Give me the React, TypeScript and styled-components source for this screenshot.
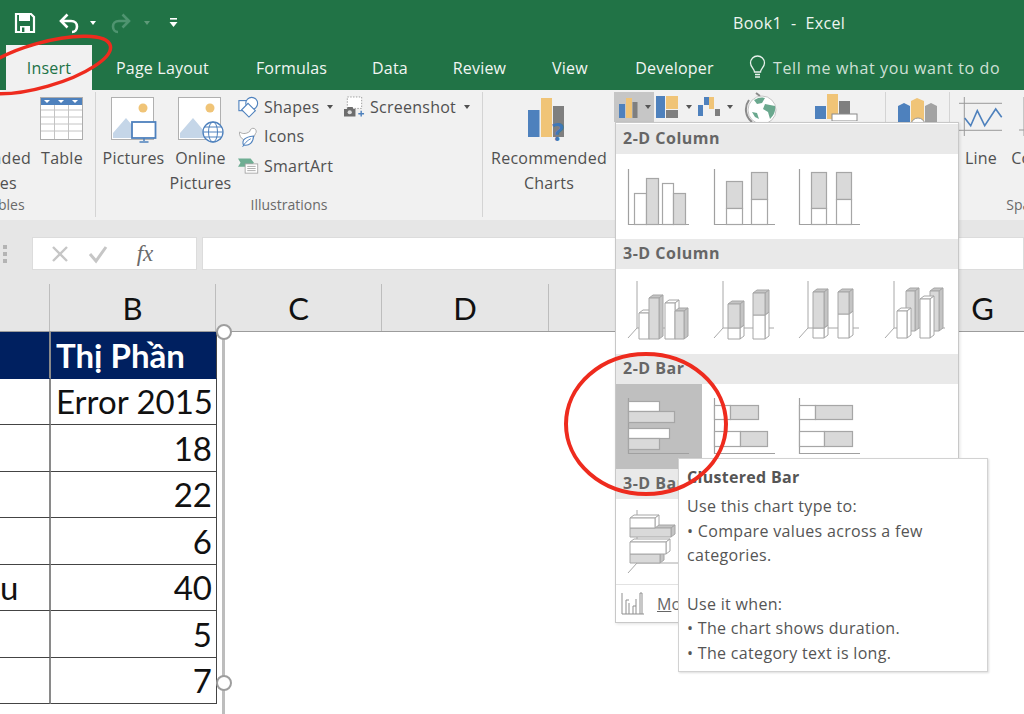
import React from "react";
import styled, { createGlobalStyle } from "styled-components";

const GREEN = "#217346";
const BLUE = "#4e81bd";
const YEL = "#f0c477";
const GRY = "#7f7f7f";
const LINE = "#a6a6a6";
const FILL = "#d9d9d9";

const Global = createGlobalStyle`
  html, body { margin: 0; padding: 0; background: #fff; }
  * { box-sizing: border-box; }
`;

const Page = styled.div`
  position: relative;
  width: 1024px;
  height: 714px;
  overflow: hidden;
  font-family: "Open Sans", "Noto Sans", sans-serif;
  background: #fff;
`;

const TitleBar = styled.header`
  height: 45px;
  background: ${GREEN};
  display: flex;
  align-items: center;
  padding-left: 14px;
`;
const Qat = styled.div`
  display: flex;
  align-items: center;
  width: 719px;
`;
const Title = styled.div`
  color: #eef5f0;
  font-size: 16px;
  letter-spacing: 0.35px;
  white-space: pre;
`;

const TabBar = styled.nav`
  height: 45px;
  background: ${GREEN};
  display: flex;
  align-items: stretch;
  padding-left: 6px;
`;
const Tab = styled.div<{ $w: number; $active?: boolean }>`
  width: ${(p) => p.$w}px;
  flex: none;
  display: flex;
  align-items: center;
  justify-content: center;
  font-size: 16px;
  letter-spacing: 0.2px;
  white-space: nowrap;
  color: ${(p) => (p.$active ? GREEN : "#f1f6f3")};
  background: ${(p) => (p.$active ? "#f1f1f1" : "transparent")};
`;
const TellMe = styled.div`
  display: flex;
  align-items: center;
  gap: 7px;
  margin-left: 11px;
  color: #cfe0d6;
  font-size: 16px;
  letter-spacing: 0.62px;
  white-space: nowrap;
`;

const Ribbon = styled.section`
  height: 130px;
  background: #f1f1f1;
  display: flex;
  padding-top: 2px;
  overflow: hidden;
  color: #505050;
  font-size: 16px;
`;
const Group = styled.div<{ $w: number; $start?: number; $open?: boolean }>`
  width: ${(p) => p.$w}px;
  margin-left: ${(p) => p.$start ?? 0}px;
  flex: none;
  height: 125px;
  display: flex;
  flex-direction: column;
  border-right: ${(p) => (p.$open ? "none" : "1px solid #d4d4d4")};
`;
const GroupBody = styled.div<{ $pad?: number }>`
  flex: 1;
  display: flex;
  padding-left: ${(p) => p.$pad ?? 0}px;
  min-height: 0;
`;
const GroupLabel = styled.div`
  height: 22px;
  line-height: 20px;
  text-align: center;
  font-size: 14px;
  color: #6a6a6a;
`;
const BigButton = styled.div<{ $w: number; $ml?: number }>`
  width: ${(p) => p.$w}px;
  margin-left: ${(p) => p.$ml ?? 0}px;
  flex: none;
  display: flex;
  flex-direction: column;
  align-items: center;
`;
const BigIcon = styled.div`
  height: 54px;
  padding-top: 5px;
  display: flex;
  justify-content: center;
`;
const BigLabel = styled.div`
  text-align: center;
  line-height: 24.5px;
  white-space: nowrap;
  letter-spacing: 0.25px;
`;
const SmallColumn = styled.div<{ $w: number; $ml?: number }>`
  width: ${(p) => p.$w}px;
  margin-left: ${(p) => p.$ml ?? 0}px;
  flex: none;
  display: flex;
  flex-direction: column;
`;
const SmallRow = styled.div`
  height: 29.5px;
  display: flex;
  align-items: center;
  gap: 5px;
  white-space: nowrap;
  letter-spacing: 0.25px;
`;
const IconSlot = styled.span`
  width: 21px;
  flex: none;
  display: flex;
  align-items: center;
  justify-content: center;
`;
const Caret = styled.span<{ $dim?: boolean; $ml?: number }>`
  display: inline-block;
  width: 0;
  height: 0;
  margin-left: ${(p) => p.$ml ?? 0}px;
  border-left: 3.5px solid transparent;
  border-right: 3.5px solid transparent;
  border-top: 4px solid ${(p) => (p.$dim ? "#5f9a79" : "currentColor")};
`;
const ChartMenus = styled.div`
  width: 272px;
  flex: none;
  margin-left: 4px;
  display: flex;
  align-items: flex-start;
`;
const ChartMenu = styled.div<{ $on?: boolean; $w: number }>`
  width: ${(p) => p.$w}px;
  height: 30px;
  flex: none;
  display: flex;
  align-items: center;
  justify-content: center;
  gap: 7px;
  color: #555;
  background: ${(p) => (p.$on ? "#c6c6c6" : "transparent")};
`;

const FormulaBar = styled.section`
  height: 64px;
  background: #e6e6e6;
  display: flex;
  align-items: center;
  gap: 5px;
  padding: 3px 0 0 3px;
`;
const Grip = styled.div`
  width: 24px;
  flex: none;
  display: flex;
  flex-direction: column;
  gap: 3px;
`;
const GripDot = styled.i`
  display: block;
  width: 4px;
  height: 4px;
  background: #b4b4b4;
`;
const NameBox = styled.div`
  width: 165px;
  height: 33px;
  flex: none;
  background: #fff;
  border: 1px solid #dcdcdc;
  display: flex;
  align-items: center;
  padding-left: 17px;
`;
const FormulaIcon = styled.span<{ $w: number }>`
  width: ${(p) => p.$w}px;
  flex: none;
  display: flex;
  justify-content: center;
`;
const Fx = styled.span`
  width: 40px;
  text-align: center;
  font-family: "Liberation Serif", serif;
  font-style: italic;
  font-size: 23px;
  color: #6a6a6a;
`;
const FormulaInput = styled.div`
  flex: 1;
  height: 33px;
  background: #fff;
  border: 1px solid #dcdcdc;
`;

const ColumnHeaders = styled.section`
  height: 48px;
  background: #e6e6e6;
  border-bottom: 1px solid #9c9c9c;
  display: grid;
  grid-template-columns: 50px 166px 166px 167px 176px 175px 166px;
`;
const ColHead = styled.div`
  border-right: 1px solid #bdbdbd;
  display: flex;
  align-items: center;
  justify-content: center;
  font-family: Lato, "Open Sans", sans-serif;
  font-size: 31px;
  color: #111;
`;

const Sheet = styled.section`
  position: relative;
  height: 382px;
  background: #fff;
`;
const Table = styled.div`
  width: 217px;
  display: grid;
  grid-template-columns: 51px 166px;
  grid-auto-rows: 46.5px;
  font-family: Lato, "Open Sans", sans-serif;
  font-size: 33px;
  color: #111;
`;
const Cell = styled.div<{ $head?: boolean; $right?: boolean; $first?: boolean }>`
  display: flex;
  align-items: center;
  justify-content: ${(p) => (p.$right ? "flex-end" : "flex-start")};
  padding: ${(p) => (p.$first ? "0" : "0 4px 0 5px")};
  border-bottom: 1px solid ${(p) => (p.$head ? "#002060" : "#444")};
  border-right: ${(p) => (p.$first ? "2px solid #8a8a8a" : "1px solid #444")};
  background: ${(p) => (p.$head ? "#002060" : "#fff")};
  color: ${(p) => (p.$head ? "#fff" : "#111")};
  font-weight: ${(p) => (p.$head ? 700 : 400)};
  white-space: nowrap;
  overflow: hidden;
`;
const FrameLine = styled.div`
  position: absolute;
  left: 222px;
  top: 0;
  bottom: 0;
  width: 3px;
  background: #bdbdbd;
`;
const Handle = styled.div<{ $top: number }>`
  position: absolute;
  left: 216px;
  top: ${(p) => p.$top}px;
  width: 16px;
  height: 16px;
  border-radius: 50%;
  background: #fff;
  border: 2.5px solid #9e9e9e;
`;

const Gallery = styled.div`
  position: absolute;
  left: 615px;
  top: 122px;
  width: 344px;
  height: 501px;
  background: #fff;
  border: 1px solid #c8c8c8;
  box-shadow: 1px 1px 3px rgba(0, 0, 0, 0.12);
  padding-top: 1px;
`;
const GalleryHead = styled.div`
  height: 29.5px;
  background: #e9e9e9;
  color: #666;
  font-weight: 700;
  font-size: 16px;
  letter-spacing: 0.5px;
  line-height: 29px;
  padding-left: 7px;
`;
const GalleryRow = styled.div`
  height: 85.5px;
  display: flex;
`;
const Thumb = styled.div<{ $on?: boolean }>`
  width: 85.5px;
  height: 85.5px;
  flex: none;
  background: ${(p) => (p.$on ? "#bfbfbf" : "transparent")};
`;
const MoreRow = styled.div`
  height: 38px;
  border-top: 1px solid #e2e2e2;
  display: flex;
  align-items: center;
  gap: 12px;
  padding-left: 5px;
  color: #666;
  font-size: 16px;
  white-space: nowrap;
  overflow: hidden;
`;

const Tooltip = styled.aside`
  position: absolute;
  left: 678px;
  top: 458px;
  width: 310px;
  height: 214px;
  background: #fff;
  border: 1px solid #d2d2d2;
  box-shadow: 1px 1px 2px rgba(0, 0, 0, 0.14);
  padding: 6px 0 0 8px;
  color: #555;
  font-size: 16px;
`;
const TipTitle = styled.div`
  font-weight: 700;
  line-height: 24.4px;
  margin-bottom: 5px;
  letter-spacing: 0.3px;
`;
const TipLine = styled.div`
  height: 24.4px;
  line-height: 24.4px;
  white-space: pre;
  letter-spacing: 0.32px;
`;

const Annotation = styled.svg<{ $x: number; $y: number }>`
  position: absolute;
  left: ${(p) => p.$x}px;
  top: ${(p) => p.$y}px;
  overflow: visible;
  pointer-events: none;
`;

/* ---------- ribbon drawings ---------- */
const Save = () => (
  <svg width="22" height="22" viewBox="0 0 22 22">
    <path d="M2 2h15l3 3v15H2z" fill="none" stroke="#fff" strokeWidth="2.2" />
    <rect x="5" y="2" width="11" height="7" fill="#fff" />
    <rect x="6" y="14" width="10" height="6" fill="#fff" />
    <rect x="8" y="15.5" width="2.4" height="4.5" fill={GREEN} />
  </svg>
);
const Undo = ({ dim }: { dim?: boolean }) => (
  <svg width="22" height="22" viewBox="0 0 22 22" style={dim ? { transform: "scaleX(-1)" } : undefined}>
    <path
      d="M9.5 2.5 3 9l6.500 6.500M3.500 9H13c4 0 6 2.500 6 5.500S17 20 14 20"
      fill="none"
      stroke={dim ? "#4f9470" : "#fff"}
      strokeWidth="2.6"
    />
  </svg>
);
const Customize = () => (
  <svg width="9" height="12" viewBox="0 0 9 12">
    <rect x="1" y="1" width="7" height="1.600" fill="#fff" />
    <path d="M0.500 5h8L4.500 10z" fill="#fff" />
  </svg>
);
const Bulb = () => (
  <svg width="17" height="25" viewBox="0 0 17 25">
    <path
      d="M5.500 17c0-3-4-5-4-9a7 7 0 0 1 14 0c0 4-4 6-4 9z"
      fill="none"
      stroke="#e8f1ec"
      strokeWidth="1.300"
    />
    <path d="M6 19.500h5M6 22h5" stroke="#e8f1ec" strokeWidth="1.600" />
  </svg>
);
const TableIcon = () => {
  const ys = [13, 20, 27, 34];
  return (
    <svg width="44" height="44" viewBox="0 0 44 44">
      <rect x="0.500" y="0.500" width="42" height="42" fill="#fff" stroke="#adadad" />
      <rect x="1" y="1" width="41" height="7" fill={BLUE} />
      {[7, 21, 35].map((x) => (
        <path key={x} d={`M${x - 3} 3h6l-3 3z`} fill="#fff" />
      ))}
      {ys.map((y) => (
        <path key={y} d={`M1 ${y}h41`} stroke="#c4c4c4" />
      ))}
      <path d="M14.500 8v34M28.500 8v34" stroke="#c4c4c4" />
    </svg>
  );
};
const PhotoBase = () => (
  <>
    <rect x="0.500" y="0.500" width="42" height="42" fill="#fff" stroke="#b0b0b0" />
    <circle cx="32" cy="11" r="4.500" fill={YEL} />
    <path d="M2 41v-5l13-15 11 13 8 7z" fill="#c5d6e8" />
  </>
);
const PicturesIcon = () => (
  <svg width="46" height="47" viewBox="0 0 46 47">
    <PhotoBase />
    <rect x="21" y="25" width="23.500" height="16" fill="#fff" stroke={BLUE} strokeWidth="1.800" />
    <path d="M33 41v3M28.500 45h9" stroke={BLUE} strokeWidth="1.500" />
  </svg>
);
const OnlineIcon = () => (
  <svg width="46" height="47" viewBox="0 0 46 47">
    <PhotoBase />
    <circle cx="35" cy="35" r="10" fill="#fff" stroke={BLUE} strokeWidth="1.300" />
    <ellipse cx="35" cy="35" rx="4.500" ry="10" fill="none" stroke={BLUE} />
    <path d="M25 35h20M26.500 30h17M26.500 40h17" stroke={BLUE} fill="none" />
  </svg>
);
const ShapesIcon = () => (
  <svg width="23" height="24" viewBox="0 0 23 24">
    <rect x="1" y="5" width="12" height="11" fill="#fff" stroke={BLUE} strokeWidth="1.200" />
    <circle cx="15" cy="8" r="6.500" fill="#fff" stroke={BLUE} strokeWidth="1.200" />
    <path d="M11 8l8 8-7 7-8-8z" fill="#fff" stroke={BLUE} strokeWidth="1.200" />
  </svg>
);
const DuckIcon = () => (
  <svg width="23" height="24" viewBox="0 0 23 24">
    <path
      d="M13 7a3.500 3.500 0 1 1 6 2.500c-1 2-1 4-4 6-3 1.500-9 1.500-11-1-2-2-3-6-2-7 2 2 6 3 11-.500z"
      fill="#fff"
      stroke="#a3a3a3"
    />
    <path d="M6 22c-2-5 1-9 11-10 0 7-5 11-10 10z" fill="#fff" stroke={BLUE} strokeWidth="1.200" />
    <path d="M5 24c2-4 5-7 9-9" stroke={BLUE} fill="none" />
  </svg>
);
const SmartArtIcon = () => (
  <svg width="25" height="20" viewBox="0 0 25 20">
    <path d="M0 1h15l4 5-4 5H0l3-5z" fill="#6fae93" />
    <rect x="8.500" y="7.500" width="15" height="11" fill="#fff" stroke="#a0a0a0" />
    <path d="M11 10.500h10M11 13h10M11 15.500h10" stroke="#a0a0a0" />
  </svg>
);
const ScreenshotIcon = () => (
  <svg width="22" height="22" viewBox="0 0 22 22">
    <rect x="3.500" y="0.500" width="15" height="12" fill="#fff" stroke="#9a9a9a" strokeDasharray="1.500 1.500" />
    <path d="M0 13h3l1-2h5l1 2h2v8H0z" fill="#6d6d6d" />
    <circle cx="6" cy="16.500" r="2.200" fill="#ddd" />
    <path d="M18 15v6M15 18h6" stroke={BLUE} strokeWidth="1.500" />
  </svg>
);
const RecommendedIcon = () => (
  <svg width="46" height="47" viewBox="0 0 46 47">
    <rect x="2" y="13" width="11.500" height="27" fill={BLUE} />
    <rect x="15" y="1" width="11" height="39" fill={YEL} />
    <rect x="27" y="9" width="11" height="31" fill={GRY} />
    <text x="26" y="44" fontSize="25" fontWeight="700" fill="#3f78b8" fontFamily="Open Sans, sans-serif">
      ?
    </text>
  </svg>
);
const ColumnMenuIcon = () => (
  <svg width="20" height="21" viewBox="0 0 20 21">
    <rect x="1" y="7" width="6" height="14" fill={BLUE} />
    <rect x="8" y="1" width="6" height="20" fill={YEL} />
    <rect x="14.500" y="5" width="5" height="16" fill={GRY} />
  </svg>
);
const HierarchyIcon = () => (
  <svg width="23" height="23" viewBox="0 0 23 23">
    <rect x="0" y="0" width="9" height="22" fill={BLUE} />
    <rect x="10" y="0" width="12" height="13" fill={YEL} />
    <rect x="10" y="14" width="12" height="8" fill={GRY} />
  </svg>
);
const WaterfallIcon = () => (
  <svg width="22" height="20" viewBox="0 0 22 20">
    <rect x="0" y="8" width="5" height="11" fill={BLUE} />
    <rect x="6" y="0" width="5" height="8" fill={BLUE} />
    <rect x="11" y="0" width="5" height="12" fill={YEL} />
    <rect x="17" y="12" width="5" height="7" fill={GRY} />
  </svg>
);
const GlobeIcon = () => (
  <svg width="34" height="30" viewBox="0 0 34 30">
    <path d="M12 1l4 3M5 8a16 16 0 0 0 3 22" stroke="#8a8a8a" strokeWidth="2" fill="none" />
    <circle cx="18" cy="18" r="14" fill="#fff" stroke="#c4c4c4" />
    <path d="M10 8c5-3 8-3 11-2l-3 5-5 1zM21 12l10 2c1 6-2 10-5 13l-2-7-5-3zM8 20l5 1 2 6-4-2z" fill="#6aa88e" />
  </svg>
);
const PivotIcon = () => (
  <svg width="44" height="28" viewBox="0 0 44 28">
    <rect x="1" y="13" width="11" height="13" fill={BLUE} />
    <rect x="13" y="1" width="11" height="25" fill={YEL} />
    <rect x="25" y="8" width="11" height="18" fill={GRY} />
    <rect x="18" y="21" width="25" height="7" fill="#fff" stroke="#8a8a8a" />
  </svg>
);
const MapIcon = () => (
  <svg width="42" height="30" viewBox="0 0 42 30">
    <path d="M1 9l6-3 6 3v20H1z" fill={BLUE} />
    <path d="M14 4l6-3 7 3v25H14z" fill={YEL} />
    <path d="M28 9l6-3 6 3v20H28z" fill="#a3a3a3" />
    <circle cx="21" cy="28" r="7" fill="#fff" stroke="#999" />
  </svg>
);
const LineIcon = () => (
  <svg width="44" height="40" viewBox="0 0 44 40">
    <path d="M5.300 0v39M0 6.300h43M0 33.300h43" stroke="#9a9a9a" fill="none" />
    <path d="M5.700 21l6 7.700 6.600-15 7.400 15 11-16.700 6 8.300" stroke={BLUE} strokeWidth="1.600" fill="none" />
  </svg>
);
const NextIcon = () => (
  <svg width="44" height="40" viewBox="0 0 44 40">
    <path d="M5 0v39M0 33h43" stroke="#9a9a9a" fill="none" />
  </svg>
);

/* ---------- gallery thumbnails ---------- */
const Thumbnail = ({ children }: { children: React.ReactNode }) => (
  <svg width="85" height="85" viewBox="0 0 85 85">
    {children}
  </svg>
);
const Axes = ({ x = 12, top = 15, y = 70, end = 73 }) => (
  <path d={`M${x + 0.5} ${top}V${y + 0.5}H${end}`} fill="none" stroke="#a0a0a0" strokeWidth="1.200" />
);
const R = ({ x, y, w, h, gray }: { x: number; y: number; w: number; h: number; gray?: boolean }) => (
  <rect x={x + 0.5} y={y + 0.5} width={w} height={h} fill={gray ? FILL : "#fff"} stroke={LINE} strokeWidth="1.200" />
);
const Box3D = ({ x, top, bottom, w, gray }: { x: number; top: number; bottom: number; w: number; gray?: boolean }) => {
  const d = 4;
  const f = gray ? FILL : "#fff";
  return (
    <g stroke={LINE} strokeWidth="1" strokeLinejoin="round">
      <path d={`M${x} ${top}l${d} -3h${w}l${-d} 3z`} fill={gray ? "#c4c4c4" : "#fff"} />
      <path d={`M${x + w} ${top}l${d} -3v${bottom - top}l${-d} 3z`} fill={gray ? "#c4c4c4" : "#fff"} />
      <rect x={x} y={top} width={w} height={bottom - top} fill={f} />
    </g>
  );
};
const Floor3D = ({ far = 72 }: { far?: number }) => (
  <path d={`M21 12V59M12 69L21 59H${far}`} fill="none" stroke="#a8a8a8" strokeWidth="1" />
);
const StackBox = ({ x, top, split, bottom, w }: { x: number; top: number; split: number; bottom: number; w: number }) => (
  <>
    <Box3D x={x} top={split} bottom={bottom} w={w} />
    <Box3D x={x} top={top} bottom={split} w={w} gray />
  </>
);

const Column2D = [
  <Thumbnail key="a">
    <Axes />
    <R x={18} y={39} w={12} h={31} />
    <R x={30} y={24} w={12} h={46} gray />
    <R x={46} y={29} w={11} h={41} />
    <R x={57} y={39} w={12} h={31} gray />
  </Thumbnail>,
  <Thumbnail key="b">
    <Axes />
    <R x={24} y={27} w={16} h={27} gray />
    <R x={24} y={54} w={16} h={16} />
    <R x={49} y={18} w={16} h={27} gray />
    <R x={49} y={45} w={16} h={25} />
  </Thumbnail>,
  <Thumbnail key="c">
    <Axes />
    <R x={24} y={18} w={15} h={36} gray />
    <R x={24} y={54} w={15} h={16} />
    <R x={49} y={18} w={15} h={27} gray />
    <R x={49} y={45} w={15} h={25} />
  </Thumbnail>,
];
const Column3D = [
  <Thumbnail key="a">
    <Floor3D />
    <Box3D x={23} top={44} bottom={70} w={10} />
    <Box3D x={33} top={29} bottom={70} w={10} gray />
    <Box3D x={49} top={34} bottom={70} w={10} />
    <Box3D x={59} top={42} bottom={70} w={9} gray />
  </Thumbnail>,
  <Thumbnail key="b">
    <Floor3D />
    <StackBox x={26} top={35} split={59} bottom={70} w={12} />
    <StackBox x={51} top={24} split={46} bottom={70} w={12} />
  </Thumbnail>,
  <Thumbnail key="c">
    <Floor3D />
    <StackBox x={26} top={23} split={59} bottom={69} w={11} />
    <StackBox x={51} top={23} split={45} bottom={69} w={11} />
  </Thumbnail>,
  <Thumbnail key="d">
    <Floor3D />
    <Box3D x={33} top={22} bottom={62} w={9} gray />
    <Box3D x={57} top={22} bottom={62} w={9} gray />
    <Box3D x={24} top={42} bottom={69} w={10} />
    <Box3D x={47} top={30} bottom={69} w={10} />
  </Thumbnail>,
];
const Bar2D = [
  <Thumbnail key="a">
    <Axes top={14} y={69} />
    <R x={12} y={17} w={31} h={10} />
    <R x={12} y={27} w={46} h={11} gray />
    <R x={12} y={44} w={41} h={10} />
    <R x={12} y={54} w={31} h={11} gray />
  </Thumbnail>,
  <Thumbnail key="b">
    <Axes top={14} y={69} />
    <R x={12} y={21} w={16} h={14} />
    <R x={28} y={21} w={28} h={14} gray />
    <R x={12} y={47} w={26} h={15} />
    <R x={38} y={47} w={27} h={15} gray />
  </Thumbnail>,
  <Thumbnail key="c">
    <Axes top={14} y={69} />
    <R x={12} y={21} w={16} h={14} />
    <R x={28} y={21} w={37} h={14} gray />
    <R x={12} y={47} w={25} h={15} />
    <R x={37} y={47} w={28} h={15} gray />
  </Thumbnail>,
];
const Bar3D = [
  <Thumbnail key="a">
    <path d="M21 11V64M12 74L21 64H73" fill="none" stroke="#a8a8a8" />
    <Box3D x={14} top={29} bottom={38} w={41} gray />
    <Box3D x={14} top={19} bottom={29} w={25} />
    <Box3D x={14} top={55} bottom={64} w={30} gray />
    <Box3D x={14} top={43} bottom={55} w={36} />
  </Thumbnail>,
];

const MoreIcon = () => (
  <svg width="24" height="24" viewBox="0 0 24 24">
    <path d="M1 1v21h22" fill="none" stroke="#8f8f8f" />
    <path d="M5 8v14M8 11v11M12 14v8M15 7v15M19 1v21M21 1v21M5 8h3M12 14h3M19 1h2" fill="none" stroke="#8f8f8f" />
  </svg>
);

const tabs: [string, number, boolean?][] = [
  ["Insert", 86, true],
  ["Page Layout", 141],
  ["Formulas", 117],
  ["Data", 80],
  ["Review", 99],
  ["View", 82],
  ["Developer", 127],
];

const rows = [
  ["", "Error 2015", false],
  ["", "18", true],
  ["", "22", true],
  ["", "6", true],
  ["u", "40", true],
  ["", "5", true],
  ["", "7", true],
] as const;

const tipLines = [
  "Use this chart type to:",
  "• Compare values across a few",
  "categories.",
  " ",
  "Use it when:",
  "• The chart shows duration.",
  "• The category text is long.",
];

export default function App() {
  return (
    <Page>
      <Global />
      <TitleBar>
        <Qat>
          <Save />
          <span style={{ width: 22 }} />
          <Undo />
          <Caret $ml={10} style={{ color: "#fff" }} />
          <span style={{ width: 14 }} />
          <Undo dim />
          <Caret $ml={12} $dim />
          <span style={{ width: 19 }} />
          <Customize />
        </Qat>
        <Title>Book1  -  Excel</Title>
      </TitleBar>
      <TabBar>
        {tabs.map(([label, w, active]) => (
          <Tab key={label} $w={w} $active={active}>
            {label}
          </Tab>
        ))}
        <TellMe>
          <Bulb />
          Tell me what you want to do
        </TellMe>
      </TabBar>

      <Ribbon>
        <Group $w={184} $start={-88}>
          <GroupBody>
            <BigButton $w={122}>
              <BigIcon />
              <BigLabel>
                Recommended
                <br />
                PivotTables
              </BigLabel>
            </BigButton>
            <BigButton $w={50} $ml={3}>
              <BigIcon>
                <TableIcon />
              </BigIcon>
              <BigLabel>Table</BigLabel>
            </BigButton>
          </GroupBody>
          <GroupLabel>Tables</GroupLabel>
        </Group>
        <Group $w={387}>
          <GroupBody $pad={5}>
            <BigButton $w={65}>
              <BigIcon>
                <PicturesIcon />
              </BigIcon>
              <BigLabel>Pictures</BigLabel>
            </BigButton>
            <BigButton $w={65} $ml={2}>
              <BigIcon>
                <OnlineIcon />
              </BigIcon>
              <BigLabel>
                Online
                <br />
                Pictures
              </BigLabel>
            </BigButton>
            <SmallColumn $w={106} $ml={5}>
              <SmallRow>
                <IconSlot>
                  <ShapesIcon />
                </IconSlot>
                Shapes
                <Caret $ml={3} />
              </SmallRow>
              <SmallRow>
                <IconSlot>
                  <DuckIcon />
                </IconSlot>
                Icons
              </SmallRow>
              <SmallRow>
                <IconSlot>
                  <SmartArtIcon />
                </IconSlot>
                SmartArt
              </SmallRow>
            </SmallColumn>
            <SmallColumn $w={130}>
              <SmallRow>
                <IconSlot>
                  <ScreenshotIcon />
                </IconSlot>
                Screenshot
                <Caret $ml={3} />
              </SmallRow>
            </SmallColumn>
          </GroupBody>
          <GroupLabel>Illustrations</GroupLabel>
        </Group>
        <Group $w={403}>
          <GroupBody $pad={5}>
            <BigButton $w={122}>
              <BigIcon>
                <RecommendedIcon />
              </BigIcon>
              <BigLabel>
                Recommended
                <br />
                Charts
              </BigLabel>
            </BigButton>
            <ChartMenus>
              <ChartMenu $w={40} $on>
                <ColumnMenuIcon />
                <Caret />
              </ChartMenu>
              <ChartMenu $w={40}>
                <HierarchyIcon />
                <Caret />
              </ChartMenu>
              <ChartMenu $w={42}>
                <WaterfallIcon />
                <Caret />
              </ChartMenu>
              <ChartMenu $w={50}>
                <GlobeIcon />
              </ChartMenu>
              <ChartMenu $w={100}>
                <PivotIcon />
              </ChartMenu>
            </ChartMenus>
          </GroupBody>
          <GroupLabel>Charts</GroupLabel>
        </Group>
        <Group $w={64}>
          <GroupBody>
            <BigButton $w={63}>
              <BigIcon>
                <MapIcon />
              </BigIcon>
              <BigLabel>3D Map</BigLabel>
            </BigButton>
          </GroupBody>
        </Group>
        <Group $w={180} $open>
          <GroupBody $pad={9}>
            <BigButton $w={44}>
              <BigIcon>
                <LineIcon />
              </BigIcon>
              <BigLabel>Line</BigLabel>
            </BigButton>
            <BigButton $w={60} $ml={8}>
              <BigIcon>
                <NextIcon />
              </BigIcon>
              <BigLabel>Column</BigLabel>
            </BigButton>
          </GroupBody>
          <GroupLabel>Sparklines</GroupLabel>
        </Group>
      </Ribbon>

      <FormulaBar>
        <Grip>
          <GripDot />
          <GripDot />
          <GripDot />
        </Grip>
        <NameBox>
          <FormulaIcon $w={20}>
            <svg width="20" height="20" viewBox="0 0 20 20">
              <path d="M3 3l14 14M17 3L3 17" stroke="#c6c6c6" strokeWidth="2.400" />
            </svg>
          </FormulaIcon>
          <FormulaIcon $w={55}>
            <svg width="20" height="20" viewBox="0 0 20 20">
              <path d="M2 10l6 7L18 3" fill="none" stroke="#c6c6c6" strokeWidth="3" />
            </svg>
          </FormulaIcon>
          <Fx>fx</Fx>
        </NameBox>
        <FormulaInput />
      </FormulaBar>

      <ColumnHeaders>
        {["", "B", "C", "D", "E", "F", "G"].map((c, i) => (
          <ColHead key={i}>{c}</ColHead>
        ))}
      </ColumnHeaders>

      <Sheet>
        <Table>
          <Cell $head $first />
          <Cell $head>Thị Phần</Cell>
          {rows.map(([a, b, right], i) => (
            <React.Fragment key={i}>
              <Cell $first>{a}</Cell>
              <Cell $right={right}>{b}</Cell>
            </React.Fragment>
          ))}
        </Table>
        <FrameLine />
        <Handle $top={-8} />
        <Handle $top={343} />
      </Sheet>

      <Gallery>
        <GalleryHead>2-D Column</GalleryHead>
        <GalleryRow>
          {Column2D.map((t, i) => (
            <Thumb key={i}>{t}</Thumb>
          ))}
        </GalleryRow>
        <GalleryHead>3-D Column</GalleryHead>
        <GalleryRow>
          {Column3D.map((t, i) => (
            <Thumb key={i}>{t}</Thumb>
          ))}
        </GalleryRow>
        <GalleryHead>2-D Bar</GalleryHead>
        <GalleryRow>
          {Bar2D.map((t, i) => (
            <Thumb key={i} $on={i === 0}>
              {t}
            </Thumb>
          ))}
        </GalleryRow>
        <GalleryHead>3-D Bar</GalleryHead>
        <GalleryRow>
          {Bar3D.map((t, i) => (
            <Thumb key={i}>{t}</Thumb>
          ))}
        </GalleryRow>
        <MoreRow>
          <MoreIcon />
          <span>
            <u>M</u>ore Column Charts...
          </span>
        </MoreRow>
      </Gallery>

      <Tooltip>
        <TipTitle>Clustered Bar</TipTitle>
        {tipLines.map((l, i) => (
          <TipLine key={i}>{l}</TipLine>
        ))}
      </Tooltip>

      <Annotation $x={0} $y={0} width="1" height="1">
        <ellipse cx="42" cy="65" rx="71" ry="22" transform="rotate(-16 42 65)" fill="none" stroke="#ee2b1e" strokeWidth="3.500" />
      </Annotation>
      <Annotation $x={0} $y={0} width="1" height="1">
        <ellipse cx="646" cy="424" rx="80" ry="70" fill="none" stroke="#ee2b1e" strokeWidth="4" />
      </Annotation>
    </Page>
  );
}
